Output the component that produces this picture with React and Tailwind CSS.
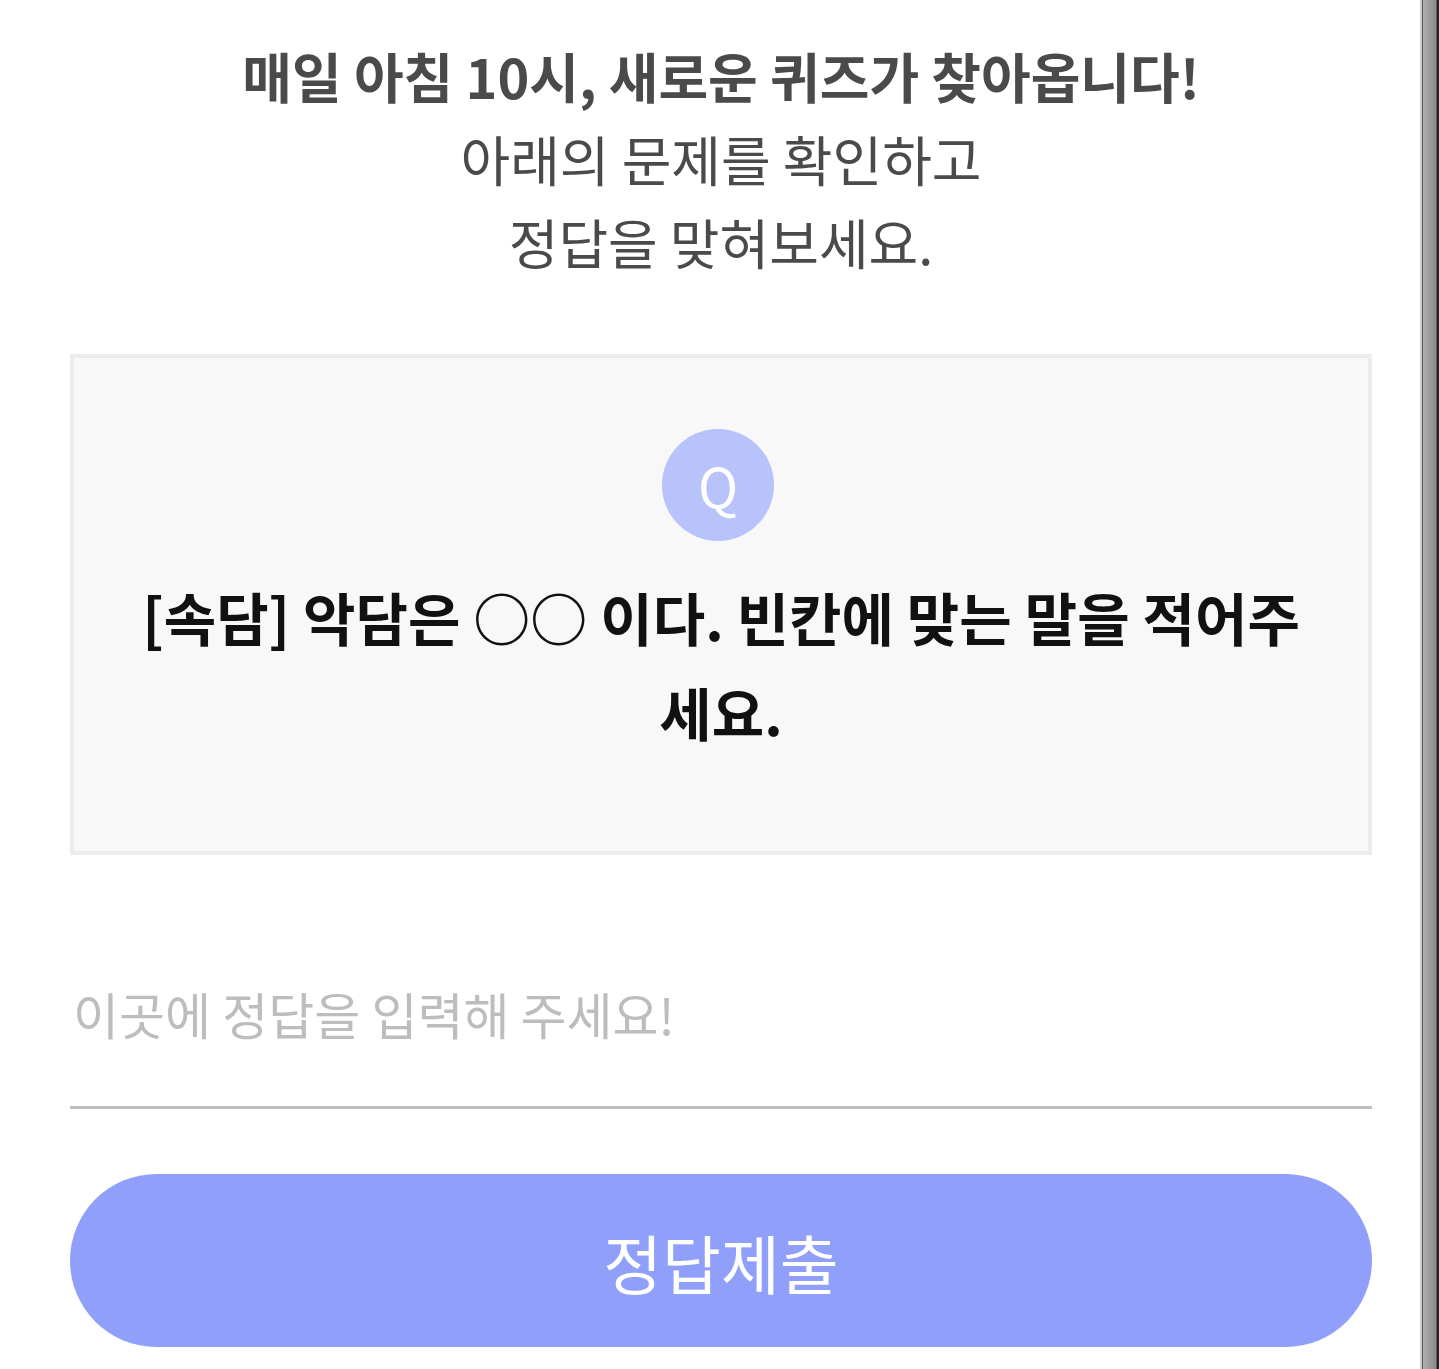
import { useState } from 'react'

function App()
{
    const [answer, setAnswer] = useState("");

    return (
        <div className="flex min-h-screen w-full bg-white font-['Noto_Sans_CJK_KR','Noto_Sans',sans-serif]">
            <div className="flex-1 pl-[70px] pr-[48px] pt-[34px] pb-[21px]">
                <div className="text-center text-[54px] leading-[83px] text-[#4a4a4a]">
                    <p className="font-bold">매일 아침 10시, 새로운 퀴즈가 찾아옵니다!</p>
                    <p>아래의 문제를 확인하고</p>
                    <p>정답을 맞혀보세요.</p>
                </div>

                <div className="mt-[71px] h-[501px] border-4 border-[#ececec] bg-[#f8f8f8] px-[60px] pt-[71px] flex flex-col items-center">
                    <div className="w-[112px] h-[112px] mr-[6px] rounded-full bg-[#b8c3fc] flex items-center justify-center">
                        <span className="text-white text-[54px] leading-none">Q</span>
                    </div>
                    <p className="mt-[28px] text-center font-bold text-[57px] leading-[95px] text-[#111111]">[속담] 악담은 ○○ 이다. 빈칸에 맞는 말을 적어주세요.</p>
                </div>

                <input
                    className="mt-[64px] block w-full h-[190px] border-b-[3px] border-[#bfbfbf] bg-transparent px-[3px] text-[50px] text-[#333333] outline-none placeholder:text-[#bdbdbd]"
                    placeholder="이곳에 정답을 입력해 주세요!"
                    value={answer}
                    onChange={(e) => setAnswer(e.target.value)}
                />

                <button className="mt-[65px] w-full h-[173px] rounded-full bg-[#8f9ffa] text-white text-[64px]">정답제출</button>
            </div>

            <div className="w-[19px] flex-none border-l-2 border-[#cccccc] flex">
                <div className="flex-1 border-l border-r border-[#5a5a5a] bg-gradient-to-r from-[#b0b0b0] to-[#8c8c8c]"></div>
                <div className="w-[2px] bg-[#222222]"></div>
            </div>
        </div>
    );
}

export default App
